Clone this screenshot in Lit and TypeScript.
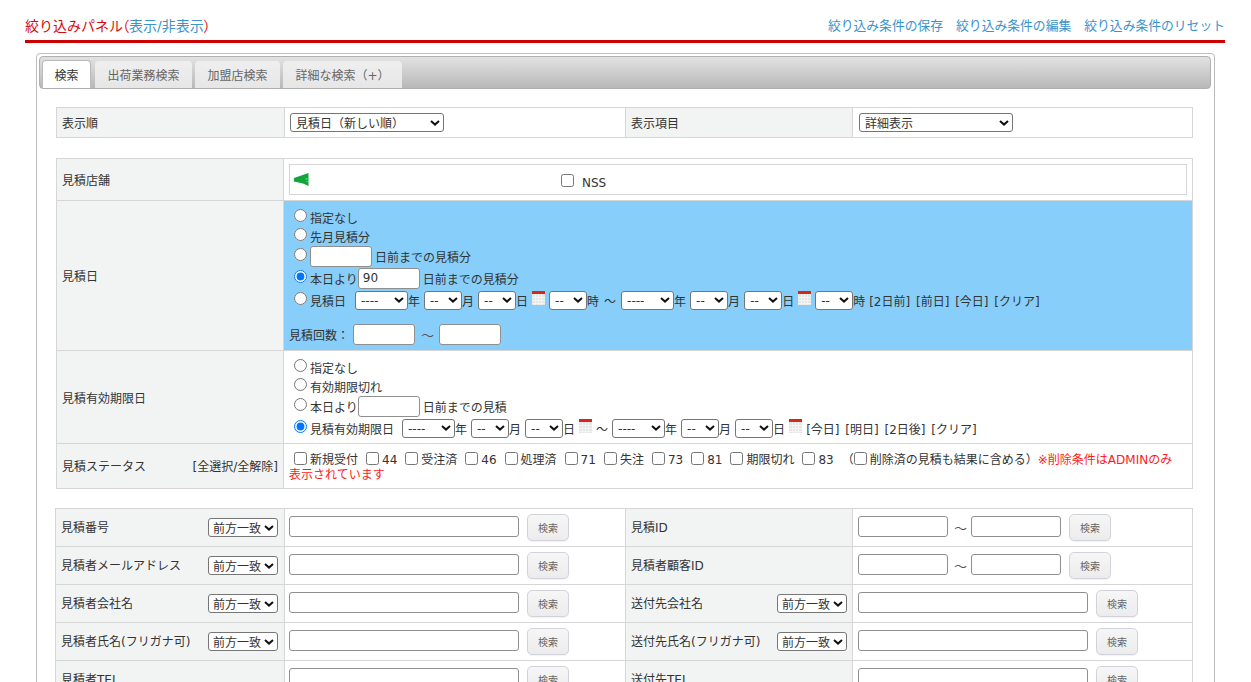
import {LitElement, css, html} from 'lit';
import {customElement} from 'lit/decorators.js';

const calendar = html`<svg class="cal" width="13" height="14" viewBox="0 0 13 14">
  <rect x="0" y="0" width="13" height="14" fill="#e6e6e6" />
  <rect x="0" y="0" width="13" height="3" fill="#d9261c" />
  <path d="M0 6.5h13M0 9.5h13M0 12.5h13M3.5 3v11M6.5 3v11M9.5 3v11" stroke="#f4f4f4" stroke-width="1" fill="none" />
</svg>`;

const megaphone = html`<svg class="mega" width="15" height="13" viewBox="0 0 15 13">
  <path d="M0 5 L14.5 0 V13 L9 10.5 L0 8.5 Z" fill="#12a53c" />
  <path d="M11.5 6h2M12.5 8.5h1" stroke="#8fdca6" stroke-width="1" />
</svg>`;

const year = html`<select class="s-year"><option>----</option></select>`;
const dd = html`<select class="s-dd"><option>--</option></select>`;
const unit = (sel: unknown, suffix: string) => html`<span class="unit">${sel}${suffix}</span>`;

const matchSelect = html`<select class="s-match"><option>前方一致</option></select>`;
const searchBtn = html`<button class="btn">検索</button>`;

type SearchCell = {label: string; kind: 'text' | 'range'; match: boolean};

const searchRows: SearchCell[][] = [
  [
    {label: '見積番号', kind: 'text', match: true},
    {label: '見積ID', kind: 'range', match: false},
  ],
  [
    {label: '見積者メールアドレス', kind: 'text', match: true},
    {label: '見積者顧客ID', kind: 'range', match: false},
  ],
  [
    {label: '見積者会社名', kind: 'text', match: true},
    {label: '送付先会社名', kind: 'text', match: true},
  ],
  [
    {label: '見積者氏名(フリガナ可)', kind: 'text', match: true},
    {label: '送付先氏名(フリガナ可)', kind: 'text', match: true},
  ],
  [
    {label: '見積者TEL', kind: 'text', match: false},
    {label: '送付先TEL', kind: 'text', match: false},
  ],
];

const statuses = ['新規受付', '44', '受注済', '46', '処理済', '71', '失注', '73', '81', '期限切れ', '83'];

@customElement('app-root')
export class AppRoot extends LitElement {
  static styles = css`
    :host {
      display: block;
      height: 682px;
      overflow: hidden;
      background: #fff;
      color: #333;
      font-family: 'DejaVu Sans', 'Noto Sans CJK JP', sans-serif;
      font-size: 12px;
    }
    a {
      color: #3b93cc;
      text-decoration: none;
    }
    .head {
      display: flex;
      justify-content: space-between;
      align-items: center;
      box-sizing: border-box;
      height: 43px;
      margin: 0 26px 0 25px;
      padding-top: 9px;
      border-bottom: 3px solid #cc0000;
    }
    .title {
      color: #d80c0c;
      font-size: 14px;
    }
    .paren {
      font-feature-settings: 'palt';
    }
    .paren.open {
      margin-left: -1px;
    }
    .links {
      display: flex;
      gap: 13px;
      font-size: 12.8px;
    }
    .panel {
      box-sizing: border-box;
      margin: 10px 36px 0 36px;
      padding: 2px 3px 0 2px;
      border: 1px solid #bbb;
      border-radius: 4px;
    }
    .tabbar {
      display: flex;
      align-items: flex-end;
      gap: 3px;
      box-sizing: border-box;
      height: 33px;
      padding: 0 0 0 2px;
      border: 1px solid #b0b0b0;
      border-radius: 4px;
      background: linear-gradient(#e2e2e2, #b8b8b8);
    }
    .tab {
      display: flex;
      align-items: center;
      justify-content: center;
      box-sizing: border-box;
      height: 27px;
      border-radius: 4px 4px 0 0;
      background: linear-gradient(#efefef, #e6e6e6);
      color: #666;
    }
    .tab.active {
      background: #fff;
      border: 1px solid #bbb;
      border-bottom: none;
      color: #333;
      height: 28px;
      margin-right: 1px;
    }
    .body {
      padding: 18px 18px 0 17px;
    }
    .grid {
      display: grid;
      grid-template-columns: 228px 341px 227px 1fr;
      border: solid #d6d6d6;
      border-width: 1px 1px 0 1px;
    }
    .grid + .grid {
      margin-top: 20px;
    }
    .grid.wide {
      grid-template-columns: 227px 1fr;
    }
    .grid.fields {
      grid-template-columns: 229px 341px 227px 1fr;
      margin-top: 19px;
      margin-left: -1px;
    }
    .label,
    .value {
      box-sizing: border-box;
      display: flex;
      align-items: center;
      border-bottom: 1px solid #d6d6d6;
    }
    .label {
      justify-content: space-between;
      padding: 0 5px;
      background: #f2f4f4;
      border-right: 1px solid #d6d6d6;
    }
    .value {
      padding: 0 5px 0 4px;
      border-right: 1px solid #d6d6d6;
    }
    .value:nth-child(4n),
    .wide .value {
      border-right: none;
    }
    .grid:not(.wide) .value:nth-child(4n) {
      padding-left: 5px;
    }
    .sort {
      height: 30px;
    }
    .sort select {
      width: 154px;
      margin-left: 1px;
    }
    select {
      box-sizing: border-box;
      appearance: none;
      flex: none;
      height: 19px;
      padding: 2px 0 0 5px;
      border: 1px solid #767676;
      border-radius: 3px;
      background: #fff
        url("data:image/svg+xml,%3Csvg xmlns='http://www.w3.org/2000/svg' width='10' height='6'%3E%3Cpath d='M1 1l4 3.6L9 1' fill='none' stroke='%23111' stroke-width='2'/%3E%3C/svg%3E")
        no-repeat right 3px center;
      color: #333;
      font: inherit;
      line-height: 14px;
    }
    input[type='text'] {
      box-sizing: border-box;
      flex: none;
      height: 21px;
      padding: 0 4px;
      border: 1px solid #8f8f8f;
      border-radius: 3px;
      background: #fff;
      color: #333;
      font: inherit;
    }
    input[type='radio'],
    input[type='checkbox'] {
      flex: none;
      width: 13px;
      height: 13px;
      margin: 0;
    }
    .shop {
      height: 42px;
    }
    .shop-box {
      flex: 1;
      display: flex;
      box-sizing: border-box;
      height: 31px;
      margin-left: 1px;
      border: 1px solid #d6d6d6;
    }
    .mega {
      flex: none;
      margin: 8px 0 0 4px;
    }
    .nss {
      display: flex;
      align-items: center;
      gap: 8px;
      height: 17px;
      margin: 9px 0 0 252px;
    }
    .nss input {
      margin-top: -5px;
    }
    .stack {
      flex-direction: column;
      align-items: stretch;
      justify-content: flex-start;
      padding-top: 7px;
    }
    .blue {
      background: #87cefa;
    }
    .line {
      display: flex;
      align-items: center;
      gap: 3px;
      white-space: nowrap;
    }
    .line.dates {
      gap: 4px;
    }
    .opt {
      display: flex;
      align-items: center;
      gap: 3px;
    }
    .opt input[type='radio'] {
      margin: -4px 0 0 6px;
    }
    .h19 {
      height: 19px;
    }
    .h18 {
      height: 18px;
    }
    .h22 {
      height: 22px;
    }
    .w62 {
      width: 62px;
    }
    .unit {
      display: flex;
      align-items: center;
    }
    .s-year {
      width: 53px;
    }
    .s-dd {
      width: 38px;
    }
    .first {
      margin-left: 1px;
    }
    .cal {
      flex: none;
      margin-top: -5px;
    }
    .dates .wave {
      margin: 0 1px;
    }
    .quick {
      word-spacing: 2px;
    }
    .count {
      gap: 4px;
      height: 21px;
      margin-top: 13px;
      margin-left: 1px;
    }
    .status {
      display: block;
      padding: 8px 5px 0 5px;
      line-height: 15px;
    }
    .status input {
      margin: 0 3px 0 0;
      vertical-align: -1px;
    }
    .status .item {
      margin-right: 8px;
    }
    .status .list {
      padding-left: 5px;
    }
    .state-label {
      padding-bottom: 2px;
    }
    .warn {
      color: #ff1a1a;
    }
    .search {
      height: 38px;
      gap: 8px;
    }
    .search.label {
      align-items: flex-start;
      padding-top: 9px;
      padding-right: 6px;
    }
    .search.label:nth-child(4n + 3) {
      padding-right: 5px;
    }
    .s-match {
      width: 70px;
      padding-left: 4px;
    }
    .wide-in {
      width: 230px;
      margin-top: -2px;
    }
    .short-in {
      width: 90px;
      margin-top: -2px;
    }
    .range {
      display: flex;
      align-items: center;
      gap: 4px;
    }
    .tilde {
      margin-left: 2px;
      color: #555;
      font-size: 13px;
    }
    .count .tilde {
      margin: 0 1px 0 2px;
    }
    .btn {
      box-sizing: border-box;
      flex: none;
      width: 42px;
      height: 27px;
      padding: 0;
      border: 1px solid #d2d2dc;
      border-radius: 5px;
      background: linear-gradient(#f6f6f6, #ececec);
      color: #666;
      font: inherit;
      font-size: 10px;
      box-shadow: 0 1px 1px rgba(0, 0, 0, 0.05);
    }
  `;

  renderSearchCell(cell: SearchCell) {
    return html`<div class="label search">
        <span>${cell.label}</span>${cell.match ? matchSelect : ''}
      </div>
      <div class="value search">
        ${cell.kind === 'range'
          ? html`<span class="range"
              ><input class="short-in" type="text" /><span class="tilde">〜</span
              ><input class="short-in" type="text"
            /></span>`
          : html`<input class="wide-in" type="text" />`}
        ${searchBtn}
      </div>`;
  }

  render() {
    return html`
      <div class="head">
        <span class="title"
          >絞り込みパネル<span class="paren open">（</span><a href="#">表示/非表示</a><span class="paren">）</span></span
        >
        <div class="links">
          <a href="#">絞り込み条件の保存</a>
          <a href="#">絞り込み条件の編集</a>
          <a href="#">絞り込み条件のリセット</a>
        </div>
      </div>
      <div class="panel">
        <div class="tabbar">
          <div class="tab active" style="width:49px">検索</div>
          <div class="tab" style="width:97px">出荷業務検索</div>
          <div class="tab" style="width:85px">加盟店検索</div>
          <div class="tab" style="width:119px">詳細な検索（+）</div>
        </div>
        <div class="body">
          <div class="grid">
            <div class="label sort">表示順</div>
            <div class="value sort">
              <select><option>見積日（新しい順）</option></select>
            </div>
            <div class="label sort">表示項目</div>
            <div class="value sort">
              <select><option>詳細表示</option></select>
            </div>
          </div>

          <div class="grid wide">
            <div class="label shop">見積店舗</div>
            <div class="value shop">
              <div class="shop-box">
                ${megaphone}
                <label class="nss"><input type="checkbox" />NSS</label>
              </div>
            </div>

            <div class="label" style="height:150px">見積日</div>
            <div class="value stack blue" style="height:150px">
              <label class="line opt h19"><input type="radio" name="d" />指定なし</label>
              <label class="line opt h18"><input type="radio" name="d" />先月見積分</label>
              <div class="line h22">
                <label class="opt"><input type="radio" name="d" /></label
                ><input class="w62" type="text" />日前までの見積分
              </div>
              <div class="line h22">
                <label class="opt"><input type="radio" name="d" checked />本日より</label
                ><input class="w62" style="margin-left:-3px" type="text" value="90" />日前までの見積分
              </div>
              <div class="line dates h22">
                <label class="opt"><input type="radio" name="d" />見積日</label>
                <span class="first"></span>
                ${unit(year, '年')} ${unit(dd, '月')} ${unit(dd, '日')} ${calendar} ${unit(dd, '時')}
                <span class="wave">〜</span>
                ${unit(year, '年')} ${unit(dd, '月')} ${unit(dd, '日')} ${calendar} ${unit(dd, '時')}
                <span class="quick">[2日前] [前日] [今日] [クリア]</span>
              </div>
              <div class="line count">
                見積回数：<input class="w62" type="text" /><span class="tilde">〜</span
                ><input class="w62" type="text" />
              </div>
            </div>

            <div class="label" style="height:93px">見積有効期限日</div>
            <div class="value stack" style="height:93px">
              <label class="line opt h19"><input type="radio" name="e" />指定なし</label>
              <label class="line opt h18"><input type="radio" name="e" />有効期限切れ</label>
              <div class="line h22">
                <label class="opt"><input type="radio" name="e" />本日より</label
                ><input class="w62" style="margin-left:-3px" type="text" />日前までの見積
              </div>
              <div class="line dates h22">
                <label class="opt"><input type="radio" name="e" checked />見積有効期限日</label>
                <span></span>
                ${unit(year, '年')} ${unit(dd, '月')} ${unit(dd, '日')} ${calendar}
                <span>〜</span>
                ${unit(year, '年')} ${unit(dd, '月')} ${unit(dd, '日')} ${calendar}
                <span class="quick">[今日] [明日] [2日後] [クリア]</span>
              </div>
            </div>

            <div class="label state-label" style="height:45px">
              <span>見積ステータス</span><span>[全選択/全解除]</span>
            </div>
            <div class="value status" style="height:45px">
              <span class="list"></span
              >${statuses.map((s) => html`<input type="checkbox" /><span class="item">${s}</span>`)}（<input
                type="checkbox"
              />削除済の見積も結果に含める）<span class="warn">※削除条件はADMINのみ<br />表示されています</span>
            </div>
          </div>

          <div class="grid fields">
            ${searchRows.map((row) => row.map((cell) => this.renderSearchCell(cell)))}
          </div>
        </div>
      </div>
    `;
  }
}
